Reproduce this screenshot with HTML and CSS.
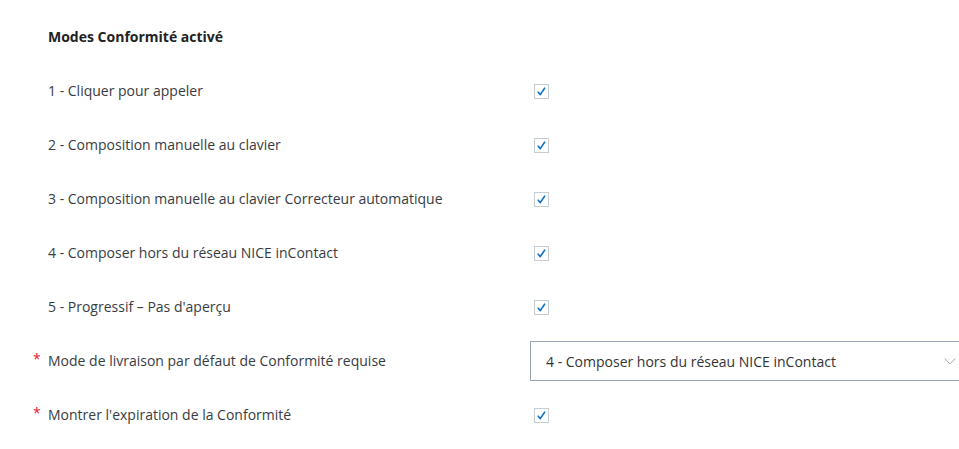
FILE: index.html
```html
<!DOCTYPE html>
<html lang="fr">
<head>
<meta charset="utf-8">
<title>Modes Conformité</title>
<link rel="stylesheet" href="styles.css">
</head>
<body>
<div class="form">
  <div class="row heading"><span class="mark"></span><span class="title">Modes Conformité activé</span><span></span></div>
  <div class="row"><span class="mark"></span><span class="label">1 - Cliquer pour appeler</span><span class="ctl"><span class="cb"><svg viewBox="0 0 15 15" width="15" height="15"><path d="M4.2 8.2 L6.3 10.6 L10.6 4.2" /></svg></span></span></div>
  <div class="row"><span class="mark"></span><span class="label">2 - Composition manuelle au clavier</span><span class="ctl"><span class="cb"><svg viewBox="0 0 15 15" width="15" height="15"><path d="M4.2 8.2 L6.3 10.6 L10.6 4.2" /></svg></span></span></div>
  <div class="row"><span class="mark"></span><span class="label">3 - Composition manuelle au clavier Correcteur automatique</span><span class="ctl"><span class="cb"><svg viewBox="0 0 15 15" width="15" height="15"><path d="M4.2 8.2 L6.3 10.6 L10.6 4.2" /></svg></span></span></div>
  <div class="row"><span class="mark"></span><span class="label">4 - Composer hors du réseau NICE inContact</span><span class="ctl"><span class="cb"><svg viewBox="0 0 15 15" width="15" height="15"><path d="M4.2 8.2 L6.3 10.6 L10.6 4.2" /></svg></span></span></div>
  <div class="row"><span class="mark"></span><span class="label">5 - Progressif – Pas d'aperçu</span><span class="ctl"><span class="cb"><svg viewBox="0 0 15 15" width="15" height="15"><path d="M4.2 8.2 L6.3 10.6 L10.6 4.2" /></svg></span></span></div>
  <div class="row"><span class="mark">*</span><span class="label">Mode de livraison par défaut de Conformité requise</span><span class="ctl"><span class="select"><span class="value">4 - Composer hors du réseau NICE inContact</span><svg class="chev" viewBox="0 0 12 7" width="12" height="7"><path d="M0.5 0.5 L6 5.8 L11.5 0.5" /></svg></span></span></div>
  <div class="row"><span class="mark">*</span><span class="label">Montrer l'expiration de la Conformité</span><span class="ctl"><span class="cb"><svg viewBox="0 0 15 15" width="15" height="15"><path d="M4.2 8.2 L6.3 10.6 L10.6 4.2" /></svg></span></span></div>
</div>
</body>
</html>
```
FILE: styles.css
```css
html, body {
  margin: 0;
  padding: 0;
  background: #ffffff;
  overflow: hidden;
}
body {
  font-family: "Open Sans", "Liberation Sans", sans-serif;
  font-size: 14px;
  color: #383c42;
  width: 959px;
  height: 449px;
}
.form {
  padding: 9px 0 0 32px;
}
.row {
  display: grid;
  grid-template-columns: 16px 482px 1fr;
  align-items: center;
  height: 54px;
}
.mark {
  color: #e8202e;
  font-size: 14px;
  padding-left: 1px;
  line-height: 1;
  position: relative;
  top: -1px;
}
.title {
  font-weight: 700;
  color: #222222;
}
.label {
  white-space: nowrap;
}
.ctl {
  display: flex;
  align-items: center;
  min-width: 0;
  position: relative;
  top: 1px;
}
.cb {
  width: 15px;
  height: 15px;
  box-sizing: border-box;
  border: 1px solid #c4ccd4;
  margin-left: 4px;
  display: flex;
  align-items: center;
  justify-content: center;
  position: relative;
}
.cb svg {
  position: absolute;
  left: -1px;
  top: -1px;
}
.cb path {
  fill: none;
  stroke: #1171c4;
  stroke-width: 1.6;
  stroke-linecap: round;
  stroke-linejoin: round;
}
.select {
  display: flex;
  align-items: center;
  justify-content: space-between;
  box-sizing: border-box;
  width: 436px;
  height: 40px;
  flex: none;
  border: 1px solid #98a4b1;
  padding: 0 9px 0 15px;
  color: #333333;
}
.chev path {
  fill: none;
  stroke: #a3adb8;
  stroke-width: 1;
}
```
